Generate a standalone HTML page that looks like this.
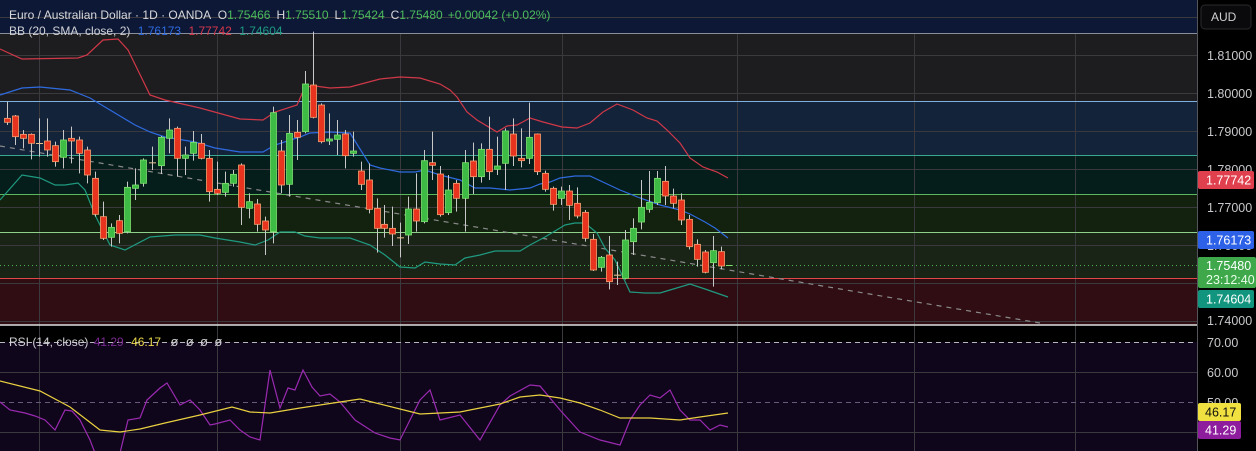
<!DOCTYPE html>
<html><head><meta charset="utf-8"><style>
html,body{margin:0;padding:0;background:#000;width:1256px;height:451px;overflow:hidden}
svg{display:block;font-family:"Liberation Sans",sans-serif}
</style></head><body>
<svg id="c" width="1256" height="451" xmlns="http://www.w3.org/2000/svg">
<rect x="0" y="0" width="1256" height="451" fill="#000"/>
<rect x="0" y="0" width="1197" height="33" fill="#0c1836"/>
<rect x="0" y="33" width="1197" height="68" fill="#1d1d1f"/>
<rect x="0" y="101" width="1197" height="54" fill="#13233a"/>
<rect x="0" y="155" width="1197" height="39" fill="#061e1b"/>
<rect x="0" y="194" width="1197" height="38" fill="#12220f"/>
<rect x="0" y="232" width="1197" height="46" fill="#1a2416"/>
<rect x="0" y="278" width="1197" height="47" fill="#300d12"/>
<rect x="0" y="342" width="1197" height="109" fill="#10061c"/>
<g id="grid" stroke="#3a3a3e" stroke-width="1"></g>
<line x1="0" y1="33.5" x2="1197" y2="33.5" stroke="#8a8e9a"/>
<line x1="0" y1="101.5" x2="1197" y2="101.5" stroke="#7fb0e0"/>
<line x1="0" y1="155.5" x2="1197" y2="155.5" stroke="#3aa890"/>
<line x1="0" y1="194.5" x2="1197" y2="194.5" stroke="#5cb85c"/>
<line x1="0" y1="232.5" x2="1197" y2="232.5" stroke="#8fd08a"/>
<line x1="0" y1="278.5" x2="1197" y2="278.5" stroke="#e04848"/>
<line x1="0" y1="265.5" x2="1197" y2="265.5" stroke="#4caf50" stroke-dasharray="1,3"/>
<line x1="0" y1="146" x2="1040" y2="323" stroke="#8a8a8a" stroke-dasharray="5,5" stroke-width="1.2"/>
<line x1="0" y1="325" x2="1197" y2="325" stroke="#e0e0e0" stroke-width="1.5"/>
<line x1="0" y1="342.5" x2="1197" y2="342.5" stroke="#b8b8c0" stroke-dasharray="5,4"/>
<line x1="0" y1="402.5" x2="1197" y2="402.5" stroke="#6a5a7a" stroke-dasharray="5,4"/>
<line x1="1197.5" y1="0" x2="1197.5" y2="451" stroke="#55565c"/>
<g id="bb" fill="none" stroke-width="1.2"></g>
<g id="cd"></g>
<g id="rsi" fill="none" stroke-width="1.2"></g>
<text x="9" y="19" font-size="12" fill="#d8d8dc">Euro / Australian Dollar · 1D · OANDA <tspan dx="4">O</tspan><tspan fill="#4cbb5c">1.75466</tspan><tspan dx="6">H</tspan><tspan fill="#4cbb5c">1.75510</tspan><tspan dx="6">L</tspan><tspan fill="#4cbb5c">1.75424</tspan><tspan dx="6">C</tspan><tspan fill="#4cbb5c">1.75480</tspan><tspan fill="#4cbb5c" dx="5">+0.00042 (+0.02%)</tspan></text>
<text x="9" y="35" font-size="12" fill="#d0d0d4">BB (20, SMA, close, 2) <tspan fill="#2f6be0" dx="4">1.76173</tspan> <tspan fill="#d8384a" dx="4">1.77742</tspan> <tspan fill="#1f9a80" dx="4">1.74604</tspan></text>
<text x="9" y="346" font-size="12" fill="#d0d0d4">RSI (14, close) <tspan fill="#7a2a90" dx="2">41.29</tspan> <tspan fill="#e8d84a" dx="4">46.17</tspan> <tspan dx="6" font-size="13">ø</tspan> <tspan dx="4" font-size="13">ø</tspan> <tspan dx="3" font-size="13">ø</tspan> <tspan dx="3" font-size="13">ø</tspan></text>
<rect x="1201" y="5" width="50" height="24" rx="4" fill="#0a0a0c" stroke="#2a2a2e"/>
<text x="1211" y="21" font-size="12" fill="#d0d0d4">AUD</text>
<g font-size="12.5" fill="#c8c8cc">
<text x="1207" y="60">1.81000</text>
<text x="1207" y="98">1.80000</text>
<text x="1207" y="136">1.79000</text>
<text x="1207" y="174">1.78000</text>
<text x="1207" y="212">1.77000</text>
<text x="1207" y="250">1.76000</text>
<text x="1207" y="325">1.74000</text>
<text x="1207" y="347">70.00</text>
<text x="1207" y="377">60.00</text>
<text x="1207" y="407">50.00</text>
</g>
<rect x="1198" y="171" width="56" height="18" rx="2" fill="#e0404e"/>
<text x="1206" y="184.5" font-size="12.5" fill="#fff">1.77742</text>
<rect x="1198" y="231" width="56" height="18" rx="2" fill="#2d62e8"/>
<text x="1206" y="244.5" font-size="12.5" fill="#fff">1.76173</text>
<rect x="1198" y="257" width="58" height="31" rx="2" fill="#3ea84a"/>
<text x="1206" y="270" font-size="12.5" fill="#fff">1.75480</text>
<text x="1206" y="284" font-size="12.5" fill="#e8ffe8">23:12:40</text>
<rect x="1198" y="290" width="56" height="18" rx="2" fill="#12957e"/>
<text x="1206" y="303.5" font-size="12.5" fill="#fff">1.74604</text>
<rect x="1198" y="403" width="43" height="18" rx="2" fill="#f0e040"/>
<text x="1205" y="416.5" font-size="12.5" fill="#111">46.17</text>
<rect x="1198" y="421" width="43" height="18" rx="2" fill="#8e1d9e"/>
<text x="1205" y="434.5" font-size="12.5" fill="#fff">41.29</text>
</svg>
<script>
var NS="http://www.w3.org/2000/svg";
function el(p,t,a){var e=document.createElementNS(NS,t);for(var k in a)e.setAttribute(k,a[k]);p.appendChild(e);return e;}
var g=document.getElementById('grid');
[39,217,400,562,737,914,1075].forEach(function(x){el(g,'line',{x1:x+.5,y1:33,x2:x+.5,y2:451});});
[17,55,93,131,169,207,245,283,321].forEach(function(y){el(g,'line',{x1:0,y1:y+.5,x2:1197,y2:y+.5});});
[372,432].forEach(function(y){el(g,'line',{x1:0,y1:y+.5,x2:1197,y2:y+.5});});
var A=[[7,215,285,265,277,'r'],[15,255,345,258,320,'r'],[23,300,355,313,325,'r'],[31,310,388,313,340,'r'],[39,265,380,339,342,'d'],[47,265,380,333,360,'r'],[55,335,410,347,395,'r'],[63,300,415,330,382,'g'],[71,290,400,325,333,'r'],[79,320,430,330,370,'r'],[87,350,460,360,435,'r'],[95,425,560,445,553,'r'],[103,515,630,560,625,'r'],[111,580,650,592,622,'g'],[119,555,640,572,610,'r'],[127,455,610,472,605,'g'],[135,415,510,465,475,'g'],[143,385,470,390,460,'g'],[152,350,420,397,399,'d'],[161,318,432,322,407,'g'],[169,265,370,300,325,'g'],[177,290,440,295,385,'r'],[185,350,435,375,385,'g'],[193,303,392,337,370,'g'],[201,312,388,340,385,'r'],[209,360,515,385,485,'r'],[217,395,495,478,490,'r'],[225,425,500,460,487,'g'],[233,420,470,433,460,'g'],[241,400,585,405,532,'r'],[249,490,565,515,535,'g'],[257,507,605,522,583,'r'],[265,560,675,573,600,'r'],[273,230,640,248,605,'g'],[281,330,490,363,465,'r'],[289,255,500,310,463,'g'],[297,270,390,307,322,'r'],[305,123,310,162,305,'g'],[313,5,265,165,262,'r'],[321,220,340,225,335,'r'],[329,250,345,327,333,'g'],[337,270,375,315,328,'g'],[345,300,415,312,377,'r'],[353,305,380,363,370,'g'],[361,395,480,423,463,'r'],[369,400,550,450,538,'r']];
var B=[[377,325,488,355,415,'r'],[384,345,443,403,415,'r'],[392,350,468,415,432,'r'],[400,398,502,442,445,'d'],[408,320,462,357,435,'g'],[416,250,425,357,393,'r'],[424,180,400,212,395,'g'],[432,125,270,218,226,'r'],[440,228,380,252,374,'r'],[448,255,375,300,368,'g'],[456,270,365,280,325,'r'],[465,180,425,218,325,'g'],[473,158,312,213,260,'r'],[481,160,278,178,260,'g'],[489,80,270,178,245,'r'],[497,140,255,228,238,'g'],[505,115,300,123,220,'g'],[513,85,228,132,198,'r'],[521,115,232,205,212,'r'],[529,38,222,142,205,'g'],[537,130,255,132,245,'r'],[545,242,305,250,298,'r'],[553,290,362,295,343,'r'],[561,290,345,303,325,'g'],[569,285,390,303,346,'r'],[577,292,385,340,378,'r'],[585,360,455,367,445,'r'],[593,432,543,448,540,'r'],[601,498,545,502,532,'g'],[609,438,598,495,575,'r'],[617,515,585,554,556,'d'],[625,420,568,450,565,'g'],[633,385,495,415,455,'g'],[641,270,418,352,396,'g'],[649,243,368,337,358,'g'],[657,243,345,265,338,'g'],[665,228,345,274,318,'r'],[673,296,355,318,340,'r'],[681,310,405,330,390,'r'],[689,375,478,388,470,'r'],[697,448,530,463,508,'r'],[705,480,550,486,547,'r'],[713,438,590,482,518,'g'],[721,470,538,485,528,'r']];
var cd=document.getElementById('cd');
function draw(arr,oy){arr.forEach(function(c){var x=c[0],wt=c[1]/3+oy,wb=c[2]/3+oy,bt=c[3]/3+oy,bb=c[4]/3+oy;
var col=c[5]=='g'?'#3dbb44':(c[5]=='r'?'#e8341f':'#c8c8c8');var br=c[5]=='g'?'#7fe070':(c[5]=='r'?'#f5a070':'#c8c8c8');
el(cd,'line',{x1:x+.5,y1:wt,x2:x+.5,y2:wb,stroke:'#c8c8c8','stroke-width':1});
if(c[5]=='d'){el(cd,'line',{x1:x-3,y1:bt+.5,x2:x+4,y2:bt+.5,stroke:'#e8c090','stroke-width':1});}
else el(cd,'rect',{x:x-2.5,y:bt,width:6,height:Math.max(bb-bt,2),fill:col,stroke:br,'stroke-width':0.8});});}
draw(A,30);draw(B,90);
el(cd,'line',{x1:726,y1:265.5,x2:732,y2:265.5,stroke:'#7fe070'});
var bb=document.getElementById('bb');
function pl(pts,col){el(bb,'polyline',{points:pts.map(function(p){return p.join(',')}).join(' '),stroke:col});}
pl([[0,49],[22,59],[78,58],[87,55],[103,40],[118,39],[128,50],[150,95],[165,100],[200,108],[240,119],[263,120],[275,112],[297,105],[305,87],[315,86],[330,88],[350,87],[380,79],[400,77],[420,78],[440,84],[450,90],[457,97],[467,112],[477,120],[497,132],[507,126],[517,125],[530,118],[543,122],[562,127],[577,128],[590,123],[603,112],[617,104],[633,110],[647,118],[657,121],[667,130],[680,143],[690,158],[703,167],[717,172],[728,178]],'#d03848');
pl([[0,95],[22,88],[40,87],[70,90],[90,98],[110,110],[135,125],[150,132],[165,137],[195,142],[215,148],[240,152],[263,152],[275,145],[300,137],[310,133],[330,132],[350,133],[370,165],[380,168],[400,172],[415,172],[425,170],[440,175],[460,180],[475,188],[490,188],[510,190],[530,188],[540,184],[550,182],[560,178],[575,176],[590,176],[605,183],[620,190],[640,198],[660,205],[680,210],[690,214],[705,222],[715,228],[728,238]],'#2f6be0');
pl([[0,200],[22,175],[40,178],[55,185],[65,185],[78,183],[85,190],[95,215],[110,245],[125,250],[150,237],[175,235],[200,235],[215,238],[240,242],[255,245],[268,240],[280,232],[295,232],[305,236],[320,238],[350,238],[370,245],[385,255],[400,267],[415,268],[425,262],[440,264],[455,265],[465,258],[480,255],[495,251],[520,251],[530,245],[545,237],[560,228],[565,225],[575,223],[585,223],[597,233],[605,248],[615,260],[630,292],[645,293],[660,293],[670,290],[690,284],[705,289],[728,297]],'#1f9a80');
var r=document.getElementById('rsi');
function pr(pts,col){el(r,'polyline',{points:pts.map(function(p){return p.join(',')}).join(' '),stroke:col});}
pr([[0,402],[10,410],[25,413],[35,416],[45,420],[55,430],[65,410],[72,411],[80,420],[90,440],[95,453],[120,453],[128,420],[140,418],[147,400],[160,388],[167,383],[180,405],[190,400],[200,410],[210,425],[215,424],[230,420],[240,430],[250,437],[260,440],[270,370],[280,408],[288,388],[295,390],[303,370],[312,387],[320,396],[330,394],[340,402],[355,420],[375,433],[390,438],[400,440],[420,400],[430,390],[440,420],[460,415],[480,440],[500,405],[510,396],[530,385],[540,386],[560,410],[580,432],[600,440],[620,445],[630,420],[640,405],[650,395],[660,398],[670,390],[680,410],[690,420],[700,420],[710,430],[720,425],[728,427]],'#9a2ab0');
pr([[0,381],[40,391],[70,407],[100,430],[120,432],[140,429],[165,423],[200,415],[232,407],[250,412],[270,413],[300,408],[340,402],[360,399],[400,409],[420,414],[460,412],[500,404],[520,397],[540,395],[560,398],[580,403],[600,410],[620,418],[650,418],[680,420],[700,417],[728,413]],'#e8d040');
</script>
</body></html>
